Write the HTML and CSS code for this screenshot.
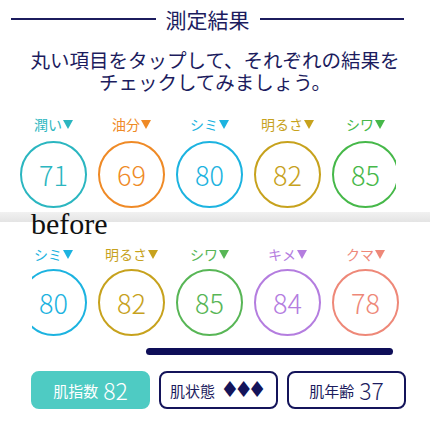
FILE: index.html
```html
<!DOCTYPE html>
<html lang="ja">
<head>
<meta charset="utf-8">
<link rel="stylesheet" href="styles.css">
</head>
<body>
<div class="header">
  <div class="rule"></div>
  <div class="title">測定結果</div>
  <div class="rule"></div>
</div>
<p class="intro">丸い項目をタップして、それぞれの結果を<br>チェックしてみましょう。</p>

<div class="view view-top">
  <div class="track">
    <div class="item c-teal"><div class="label">潤い<span class="tri"></span></div><div class="circle">71</div></div>
    <div class="item c-orange"><div class="label">油分<span class="tri"></span></div><div class="circle">69</div></div>
    <div class="item c-sky"><div class="label">シミ<span class="tri"></span></div><div class="circle">80</div></div>
    <div class="item c-gold"><div class="label">明るさ<span class="tri"></span></div><div class="circle">82</div></div>
    <div class="item c-green"><div class="label">シワ<span class="tri"></span></div><div class="circle">85</div></div>
  </div>
</div>

<div class="before">before</div>

<div class="view view-bottom">
  <div class="track track-shift">
    <div class="item c-sky"><div class="label">シミ<span class="tri"></span></div><div class="circle">80</div></div>
    <div class="item c-gold"><div class="label">明るさ<span class="tri"></span></div><div class="circle">82</div></div>
    <div class="item c-green2"><div class="label">シワ<span class="tri"></span></div><div class="circle">85</div></div>
    <div class="item c-purple"><div class="label">キメ<span class="tri"></span></div><div class="circle">84</div></div>
    <div class="item c-salmon"><div class="label">クマ<span class="tri"></span></div><div class="circle">78</div></div>
  </div>
</div>

<div class="scrollbar"></div>

<div class="buttons">
  <div class="btn btn-active"><span class="btn-label">肌指数</span><span class="btn-num">82</span></div>
  <div class="btn"><span class="btn-label">肌状態</span><span class="btn-dia">♦♦♦</span></div>
  <div class="btn"><span class="btn-label">肌年齢</span><span class="btn-num">37</span></div>
</div>
</body>
</html>
```

FILE: styles.css
```css
html, body {
  margin: 0;
  padding: 0;
  background: #ffffff;
}
body {
  width: 430px;
  height: 430px;
  overflow: hidden;
  font-family: "Noto Sans CJK JP", "Noto Sans", sans-serif;
  color: #1c1c5e;
}
.header {
  display: flex;
  align-items: center;
  gap: 10px;
  padding: 8px 26px 0 11px;
  height: 22px;
}
.rule {
  flex: 1;
  height: 2px;
  background: #1c1c5e;
}
.title {
  font-size: 21px;
  line-height: 22px;
}
.intro {
  margin: 19px 0 0 0;
  text-align: center;
  font-size: 19.5px;
  line-height: 22px;
}
.view {
  overflow: hidden;
}
.view-top {
  width: 396px;
  padding-top: 21px;
}
.view-bottom {
  margin-left: 32px;
  width: 398px;
  margin-top: 8px;
}
.track {
  display: flex;
  gap: 11px;
  padding-left: 20px;
}
.track-shift {
  padding-left: 0;
  margin-left: -12px;
}
.item {
  flex: 0 0 67px;
  display: flex;
  flex-direction: column;
  align-items: center;
}
.label {
  font-size: 14px;
  line-height: 20px;
  height: 20px;
  white-space: nowrap;
  display: flex;
  align-items: center;
}
.tri {
  display: inline-block;
  width: 0;
  height: 0;
  margin-left: 1px;
  border-left: 5px solid transparent;
  border-right: 5px solid transparent;
  border-top: 9px solid currentColor;
}
.circle {
  margin-top: 7px;
  width: 67px;
  height: 67px;
  box-sizing: border-box;
  border: 2.5px solid currentColor;
  border-radius: 50%;
  display: flex;
  align-items: center;
  justify-content: center;
  font-size: 27px;
  font-weight: 300;
}
.view-bottom .circle {
  margin-top: 5px;
}
.view-top .item:last-child .circle {
  margin-bottom: 4px;
}
.c-teal { color: #2bb6c0; }
.c-orange { color: #ef8a26; }
.c-sky { color: #1cb3e0; }
.c-gold { color: #c7a21d; }
.c-green { color: #46b849; }
.c-green2 { color: #58b656; }
.c-purple { color: #b47ddf; }
.c-salmon { color: #ee8878; }
.before {
  font-family: "Liberation Serif", serif;
  font-size: 30px;
  line-height: 24px;
  height: 24px;
  color: #111111;
  padding-left: 31px;
  background: linear-gradient(#f1f1f1, #e4e4e4) top left / 100% 10px no-repeat;
}
.scrollbar {
  margin: 12px 0 0 146px;
  width: 247px;
  height: 7px;
  border-radius: 4px;
  background: #0e0e58;
}
.buttons {
  display: flex;
  gap: 9px;
  padding-left: 31px;
  margin-top: 16px;
}
.btn {
  width: 119px;
  height: 38px;
  box-sizing: border-box;
  border: 2px solid #14145a;
  border-radius: 8px;
  display: flex;
  align-items: center;
  justify-content: center;
  gap: 5px;
  color: #1c1c5e;
}
.btn-active {
  background: #4ecbc3;
  border-color: #4ecbc3;
  color: #ffffff;
}
.btn-label {
  font-size: 15px;
}
.btn-num {
  font-size: 23px;
  font-weight: 300;
  line-height: 1;
}
.btn-dia {
  font-family: "DejaVu Sans", sans-serif;
  font-size: 22px;
  line-height: 1;
  letter-spacing: -6px;
  padding-right: 6px;
  color: #14145a;
}
```
